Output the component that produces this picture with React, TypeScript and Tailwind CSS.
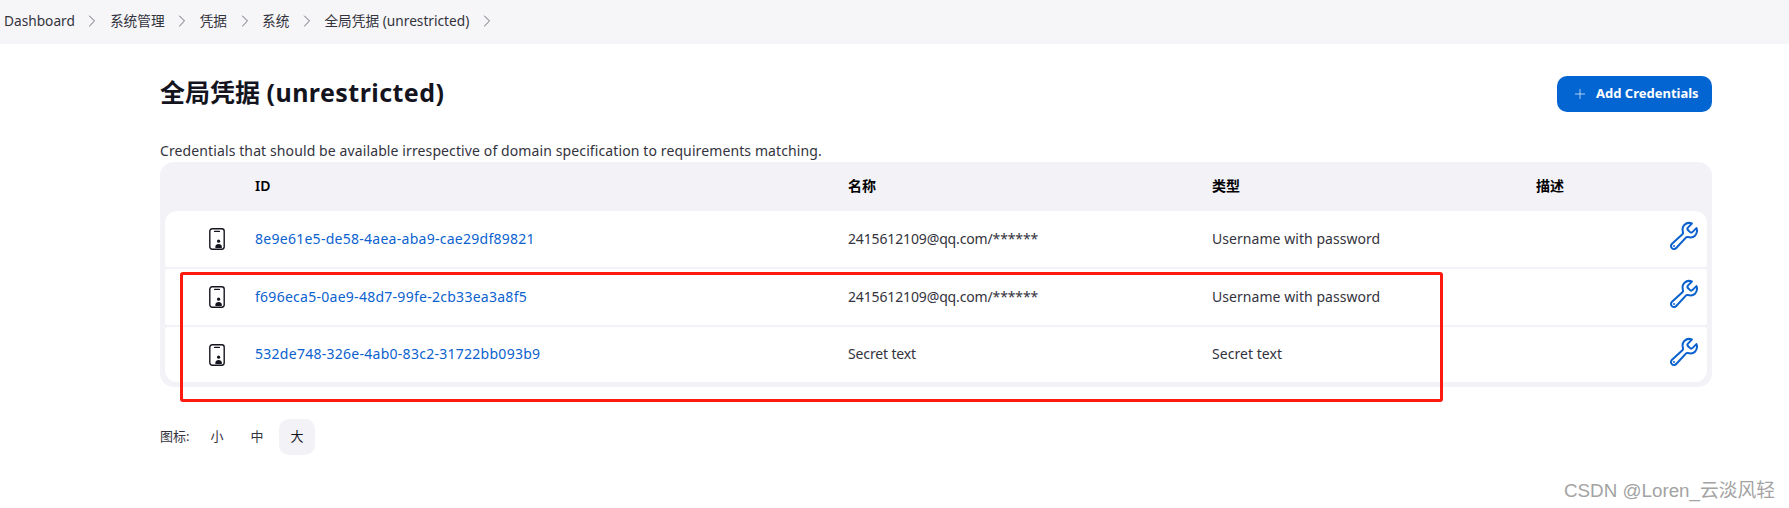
import { ChevronRight, Plus } from 'lucide-react'
import { IoBuildOutline } from 'react-icons/io5'

const crumbs = ['Dashboard', '系统管理', '凭据', '系统', '全局凭据 (unrestricted)']

const rows = [
  {
    id: '8e9e61e5-de58-4aea-aba9-cae29df89821',
    name: '2415612109@qq.com/******',
    type: 'Username with password',
    height: 'h-[56px]',
  },
  {
    id: 'f696eca5-0ae9-48d7-99fe-2cb33ea3a8f5',
    name: '2415612109@qq.com/******',
    type: 'Username with password',
    height: 'h-[56px]',
  },
  {
    id: '532de748-326e-4ab0-83c2-31722bb093b9',
    name: 'Secret text',
    type: 'Secret text',
    height: 'h-[55px]',
  },
]

const IdCard = () => (
  <svg width="16" height="22" viewBox="0 0 16 22" fill="none">
    <rect x="0.8" y="0.8" width="14.4" height="20.4" rx="2.4" stroke="#14141f" strokeWidth="1.4" />
    <path d="M5.5 3.4h5" stroke="#14141f" strokeWidth="1.1" strokeLinecap="round" />
    <circle cx="9.6" cy="13.2" r="1.6" fill="#14141f" />
    <path d="M6.4 20v-1.4c0-1.7 1.4-2.7 3.2-2.7s3.2 1 3.2 2.7V20z" fill="#14141f" />
  </svg>
)

export default function App() {
  return (
    <div className="relative h-[508px] w-[1789px] overflow-hidden bg-white font-['Noto_Sans','Noto_Sans_CJK_SC',sans-serif] text-[14px] text-[#33333d]">
      <nav className="flex h-[44px] items-center bg-[#f6f6f8] pb-[2px] pl-[4px] text-[13.7px]">
        {crumbs.map((crumb) => (
          <div key={crumb} className="flex items-center">
            <span>{crumb}</span>
            <span className="flex w-[35px] justify-center text-[#6b6b76]">
              <ChevronRight size={20} strokeWidth={1.2} />
            </span>
          </div>
        ))}
      </nav>

      <main className="pl-[160px] pr-[77px]">
        <div className="mt-[32px] flex h-[36px] items-center justify-between">
          <h1 className="pb-[2px] text-[25px] font-bold text-[#14141f]">
            全局凭据 <span className="tracking-[0.45px]">(unrestricted)</span>
          </h1>
          <button className="flex h-[36px] w-[155px] items-center rounded-[10px] bg-[#0265d2] pl-[15px] text-[13px] font-bold text-white">
            <Plus size={16} strokeWidth={1} className="mr-[8px]" />
            Add Credentials
          </button>
        </div>

        <p className="mt-[29px] h-[21px] leading-[20px] tracking-[0.11px]">
          Credentials that should be available irrespective of domain specification to requirements matching.
        </p>

        <div className="rounded-[14px] bg-[#f2f2f7] px-[5px] pb-[5px]">
          <div className="grid h-[49px] grid-cols-[90px_593px_364px_324px_1fr] items-center pb-[2px] font-semibold text-[#000000]">
            <span />
            <span>ID</span>
            <span>名称</span>
            <span>类型</span>
            <span>描述</span>
          </div>
          <div className="flex flex-col gap-[2px]">
            {rows.map((row, i) => (
              <div
                key={row.id}
                className={`grid ${row.height} grid-cols-[90px_593px_364px_324px_1fr] items-center bg-white ${
                  i === 0 ? 'rounded-t-[12px] rounded-b-[3px]' : i === 2 ? 'rounded-b-[12px] rounded-t-[3px]' : 'rounded-[3px]'
                }`}
              >
                <span className="flex justify-center pl-[14px]">
                  <IdCard />
                </span>
                <a className="pb-[2px] tracking-[0.27px] text-[#0b62cf]">{row.id}</a>
                <span className="pb-[2px] tracking-[-0.14px]">{row.name}</span>
                <span className="pb-[2px] tracking-[0.05px]">{row.type}</span>
                <span className="flex justify-end pr-[7px] pb-[6px] text-[#0b62cf]">
                  <IoBuildOutline size={32} />
                </span>
              </div>
            ))}
          </div>
        </div>

        <div className="mt-[32px] flex items-center text-[13px]">
          <span className="mr-[7px] w-[32px] whitespace-nowrap">图标:</span>
          <div className="flex gap-[4px]">
            <span className="flex h-[36px] w-[36px] items-center justify-center rounded-[10px]">小</span>
            <span className="flex h-[36px] w-[36px] items-center justify-center rounded-[10px]">中</span>
            <span className="flex h-[36px] w-[36px] items-center justify-center rounded-[10px] bg-[#f2f2f7] text-[#14141f]">大</span>
          </div>
        </div>
      </main>

      <div className="pointer-events-none absolute left-[180px] top-[272px] h-[130px] w-[1263px] rounded-[3px] border-[3px] border-[#ff1a10]" />

      <div className="absolute left-[1564px] top-[477px] font-['Liberation_Sans','Noto_Sans_CJK_SC',sans-serif] text-[18.8px] text-[#a3a3a3]">
        CSDN @Loren_云淡风轻
      </div>
    </div>
  )
}
